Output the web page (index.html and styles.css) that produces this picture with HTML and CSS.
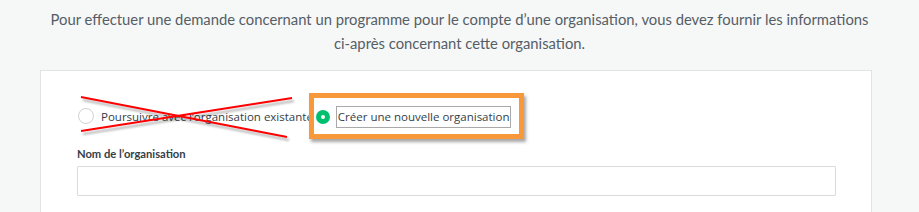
FILE: index.html
```html
<!DOCTYPE html>
<html lang="fr">
<head>
  <meta charset="UTF-8">
  <title>Organisation</title>
  <link rel="stylesheet" href="styles.css">
</head>
<body>
  <p class="intro">Pour effectuer une demande concernant un programme pour le compte d’une organisation, vous devez fournir les informations<br>ci-après concernant cette organisation.</p>

  <div class="card">
    <div class="org-choice">
      <label class="option">
        <span class="radio"></span>
        <span class="option-text">Poursuivre avec l’organisation existante</span>
      </label>
      <label class="option option-marked">
        <span class="radio radio-on"></span>
        <span class="option-text option-boxed">Créer une nouvelle organisation</span>
      </label>
      <svg class="cross" width="230" height="50" viewBox="0 0 230 50">
        <line x1="4" y1="4" x2="210" y2="44" stroke="#ff0000" stroke-width="2"/>
        <line x1="4" y1="38" x2="215" y2="5" stroke="#ff0000" stroke-width="2"/>
      </svg>
    </div>

    <div class="field">
      <div class="field-label">Nom de l’organisation</div>
      <input class="field-input" type="text">
    </div>
  </div>
</body>
</html>
```

FILE: styles.css
```css
body {
  margin: 0;
  background-color: #f6f7f7;
  font-family: "Open Sans", "Liberation Sans", sans-serif;
  color: #333e48;
}
.intro {
  margin: 0;
  padding-top: 7px;
  font-family: Lato, "Liberation Sans", sans-serif;
  font-size: 14.8px;
  line-height: 24px;
  text-align: center;
  color: #555e66;
}
.card {
  margin: 15px 0 0 40px;
  width: 758px;
  padding: 22px 36px 40px 36px;
  background-color: #fff;
  border: 1px solid #e2e4e4;
}
.org-choice {
  position: relative;
  display: flex;
  align-items: center;
}
.option {
  display: flex;
  align-items: center;
  gap: 7px;
  font-size: 11.5px;
}
.radio {
  width: 14px;
  height: 14px;
  border: 1px solid #cfd2d4;
  border-radius: 50%;
  margin-left: 1px;
}
.radio-on {
  width: 4px;
  height: 4px;
  border: 5px solid #00bf6f;
  background-color: #fff;
  margin-left: 0;
}
.option-marked {
  margin-left: -4px;
  padding: 8px 8px 6px 2px;
  gap: 6px;
  border: 5px solid #f7993a;
  box-shadow: 2px 3px 3px rgba(0,0,0,0.35);
}
.option-boxed {
  padding: 2px 1px 3px 1px;
  border: 1px solid #a9a9a9;
}
.cross {
  position: absolute;
  left: 0;
  top: 0;
  filter: drop-shadow(2px 3px 1px rgba(0,0,0,0.3));
}
.field {
  margin-top: 8px;
}
.field-label {
  font-family: Lato, "Liberation Sans", sans-serif;
  font-size: 11.2px;
  font-weight: 700;
  color: #333e48;
  margin-bottom: 6px;
}
.field-input {
  display: block;
  width: 759px;
  height: 30px;
  box-sizing: border-box;
  margin: 0;
  border: 1px solid #d9dcdd;
  border-radius: 1px;
}
```
